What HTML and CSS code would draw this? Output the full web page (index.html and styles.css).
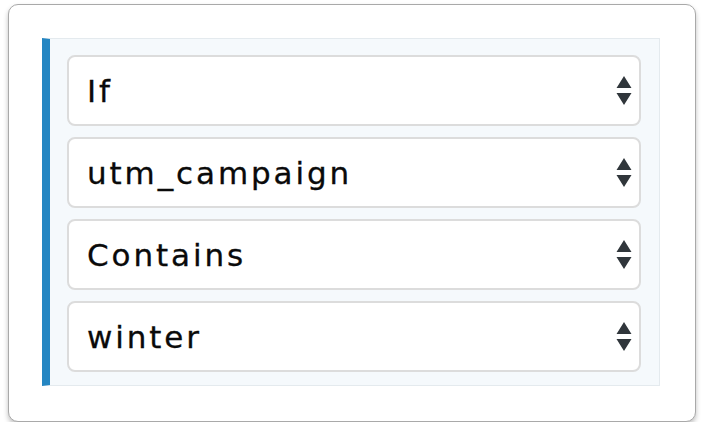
FILE: index.html
```html
<!DOCTYPE html>
<html lang="en">
<head>
    <meta charset="UTF-8">
    <meta name="viewport" content="width=device-width, initial-scale=1.0">
    <title>Condition</title>
    <link rel="stylesheet" href="styles.css">
</head>
<body>
    <div class="card">
        <div class="rule">
            <div class="field">
                <span class="value">If</span>
                <svg class="arrows" width="16" height="30" viewBox="0 0 16 30"><path d="M8 0 L15.5 12 L0.5 12 Z M0.5 17 L15.5 17 L8 29 Z" fill="#30363b"/></svg>
            </div>
            <div class="field">
                <span class="value">utm_campaign</span>
                <svg class="arrows" width="16" height="30" viewBox="0 0 16 30"><path d="M8 0 L15.5 12 L0.5 12 Z M0.5 17 L15.5 17 L8 29 Z" fill="#30363b"/></svg>
            </div>
            <div class="field">
                <span class="value">Contains</span>
                <svg class="arrows" width="16" height="30" viewBox="0 0 16 30"><path d="M8 0 L15.5 12 L0.5 12 Z M0.5 17 L15.5 17 L8 29 Z" fill="#30363b"/></svg>
            </div>
            <div class="field">
                <span class="value">winter</span>
                <svg class="arrows" width="16" height="30" viewBox="0 0 16 30"><path d="M8 0 L15.5 12 L0.5 12 Z M0.5 17 L15.5 17 L8 29 Z" fill="#30363b"/></svg>
            </div>
        </div>
    </div>
</body>
</html>
```

FILE: styles.css
```css
body {
    margin: 0;
    background-color: #fff;
    font-family: "DejaVu Sans", Inter, sans-serif;
}
.card {
    margin: 4px 0 0 8px;
    width: 688px;
    height: 418px;
    box-sizing: border-box;
    padding: 33px 35px 0 33px;
    background-color: #fff;
    border: 1px solid #a9a9a9;
    border-radius: 10px;
    box-shadow: 0 3px 5px rgba(0, 0, 0, 0.25);
}
.rule {
    display: flex;
    flex-direction: column;
    gap: 11px;
    padding: 16px 18px 13px 17px;
    background-color: #f5f9fc;
    border: 1px solid #e4eaee;
    border-left: 8px solid #2586c2;
}
.field {
    display: flex;
    align-items: center;
    justify-content: space-between;
    height: 71px;
    box-sizing: border-box;
    padding: 0 7px 0 18px;
    background-color: #fff;
    border: 2px solid #dcdcdc;
    border-radius: 8px;
}
.value {
    font-size: 31px;
    letter-spacing: 2.9px;
    color: #0a0a0a;
    -webkit-text-stroke: 0.3px #0a0a0a;
}
.arrows {
    display: block;
}
```
